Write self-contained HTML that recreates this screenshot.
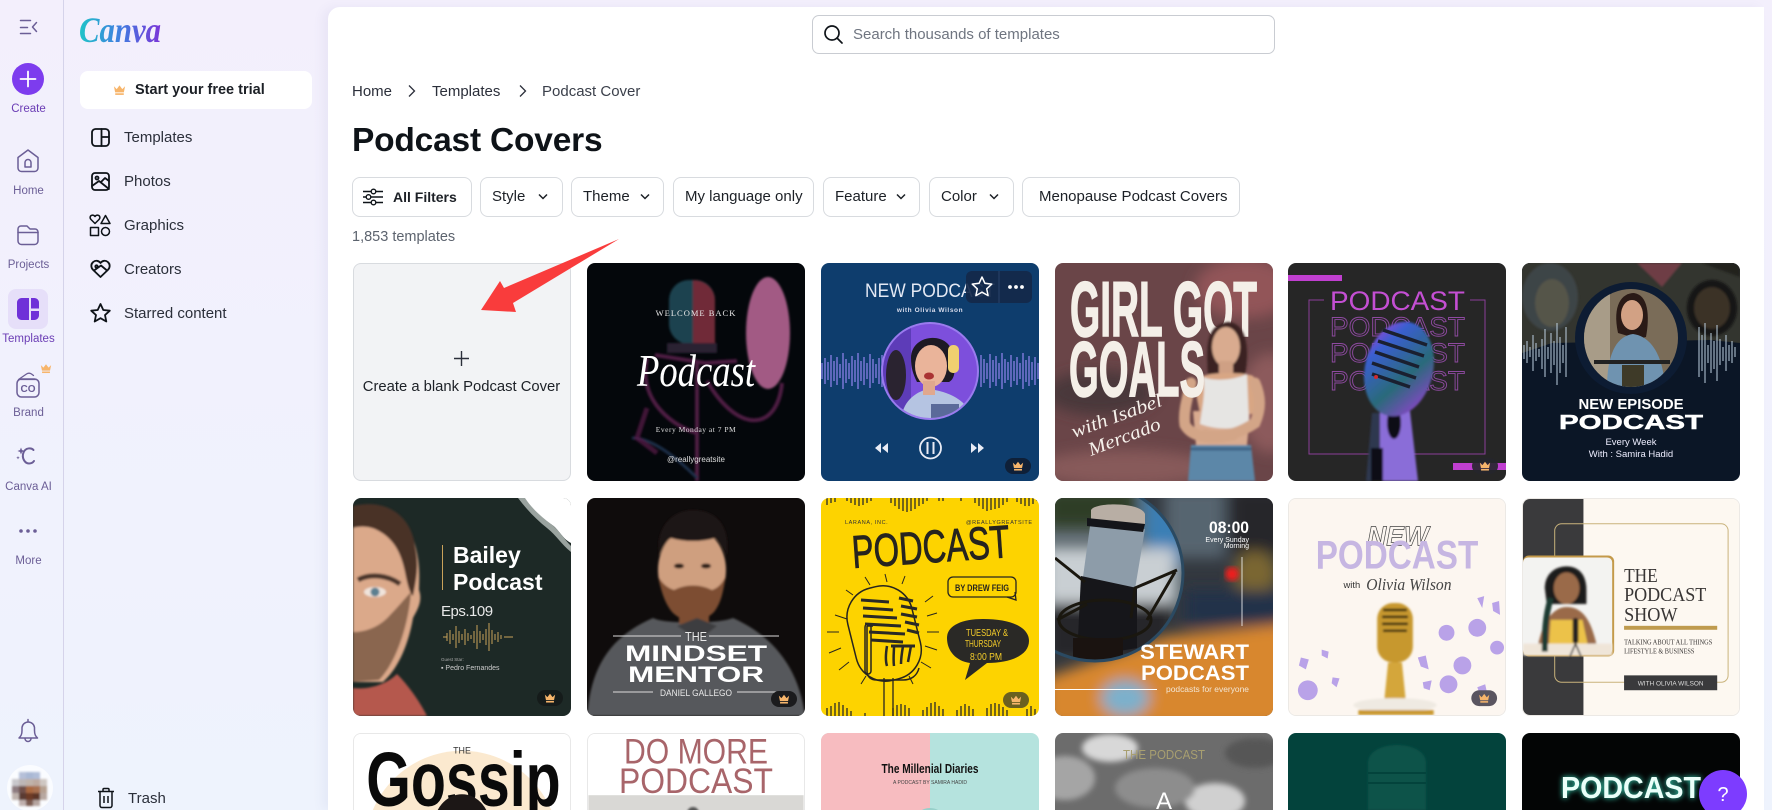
<!DOCTYPE html>
<html lang="en"><head><meta charset="utf-8"><title>Podcast Covers</title>
<style>
*{box-sizing:border-box}
html,body{margin:0;padding:0;width:1772px;height:810px;overflow:hidden}
#r{width:1772px;height:810px;overflow:hidden;position:relative;font-family:"Liberation Sans",sans-serif;background:linear-gradient(180deg,#f3effc 0%,#f1f1fd 45%,#eef3fd 100%);color:#0e1318}
.a{position:absolute;white-space:nowrap}
.rail{position:absolute;left:63px;top:0;width:1px;height:810px;background:#d5d3ea}
.rl{position:absolute;left:0;width:57px;text-align:center;font-size:11.5px;line-height:14px;color:#6b5e96;white-space:nowrap}
.pl{position:absolute;left:124px;font-size:15px;line-height:18px;color:#2b2f3a;white-space:nowrap}
.main{position:absolute;left:328px;top:7px;width:1436px;height:803px;background:#fff;border-radius:12px 0 0 0;box-shadow:-6px 0 10px rgba(90,90,160,.06)}
.f{position:absolute;top:177px;height:40px;border:1px solid #d8dbdf;border-radius:8px;background:#fff;font-size:15px;line-height:38px;color:#1c2026;white-space:nowrap;padding-left:11px}
.f svg{position:absolute;top:14px}
.c{position:absolute;width:218px;height:218px;border-radius:8px;overflow:hidden;display:block}
.c3{position:absolute;top:733px;width:218px;height:77px;border-radius:8px 8px 0 0;overflow:hidden;display:block}
text{font-family:"Liberation Sans",sans-serif}
</style></head><body><div id="r">
<svg width="0" height="0" style="position:absolute"><defs>
<filter id="b1"><feGaussianBlur stdDeviation="1"/></filter>
<filter id="b3"><feGaussianBlur stdDeviation="3"/></filter>
<filter id="b6" x="-40%" y="-40%" width="180%" height="180%"><feGaussianBlur stdDeviation="7"/></filter>
<symbol id="cr" viewBox="0 0 14 12"><path d="M1 2l3 3 3-4 3 4 3-3-1.300 6.500H2.300z" fill="#f7b56b"/><rect x="2.400" y="9.500" width="9.200" height="1.800" fill="#f7b56b"/></symbol>
<linearGradient id="lg" x1="0" x2="1"><stop offset="0" stop-color="#1fc4c8"/><stop offset=".5" stop-color="#3f7de0"/><stop offset="1" stop-color="#7b35d8"/></linearGradient>
<clipPath id="cc3"><circle cx="109" cy="108" r="47"/></clipPath>
<clipPath id="cc6"><ellipse cx="109" cy="75" rx="47" ry="49"/></clipPath>
<clipPath id="cc10"><circle cx="40" cy="75" r="88"/></clipPath>
</defs></svg>

<div class="rail"></div>
<svg class="a" style="left:0;top:0" width="63" height="810" fill="none" stroke="#6b5e96" stroke-width="1.500" stroke-linecap="round" stroke-linejoin="round">
<path d="M20.500 20.500h10M20.500 27.500h7M20.500 33.500h10M36.500 22.500l-4 4.500 4 4.500"/>
<circle cx="28" cy="79" r="16" fill="#7d3cee" stroke="none"/>
<path d="M28 71.500v15M20.500 79h15" stroke="#fff" stroke-width="1.800"/>
<path d="M18 157.500l10-7.500 10 7.500v10.500a3.500 3.500 0 0 1-3.500 3.500h-13a3.500 3.500 0 0 1-3.500-3.500z"/><path d="M25 167v-4.500a3 3 0 0 1 6 0v4.500z"/>
<path d="M18 229a3 3 0 0 1 3-3h6l3 3h5a3 3 0 0 1 3 3v9a3.500 3.500 0 0 1-3.500 3.500h-13a3.500 3.500 0 0 1-3.500-3.500z"/><path d="M18 232.500h20"/>
<rect x="8" y="289" width="40" height="40" rx="8" fill="#e6dff9" stroke="none"/>
<path d="M21.500 298H29v22h-7.500a4.500 4.500 0 0 1-4.500-4.500v-13a4.500 4.500 0 0 1 4.500-4.500zM31 298h3.500a4.500 4.500 0 0 1 4.500 4.500v6h-8zM31 311h8v4.500a4.500 4.500 0 0 1-4.500 4.500H31z" fill="#6f31d8" stroke="none"/>
<path d="M18.500 379.500l8-5.500c1.500-1 3.500-1 5 0l2 1.500M20 379.500h16" stroke-width="1.300"/><rect x="17" y="379" width="22" height="18" rx="4.500"/>
<text x="28" y="392" text-anchor="middle" font-size="10" font-weight="700" stroke="none" fill="#6b5e96">CO</text>
<use href="#cr" x="40" y="363" width="12" height="11" stroke="none"/>
<path d="M33.500 450c-2-2.500-8-2.500-10 2.500-2 5 1 11 5.500 11 2 0 4-1 5-2.500" stroke-width="2"/>
<path d="M21 447.500l1 2.500 2.500 1-2.500 1-1 2.500-1-2.500-2.500-1 2.500-1zM18 456l.5 1.200 1.200.5-1.200.5-.5 1.200-.5-1.200-1.200-.5 1.200-.5z" fill="#6b5e96" stroke="none"/>
<g fill="#6b5e96" stroke="none"><circle cx="21" cy="531" r="1.800"/><circle cx="28" cy="531" r="1.800"/><circle cx="35" cy="531" r="1.800"/></g>
<path d="M19 738h18.500c-2-2-3-3.500-3-7.500v-3a6.300 6.300 0 0 0-12.500 0v3c0 4-1 5.500-3 7.500z"/><path d="M28 719.500v1.500M25 738.500a3 3 0 0 0 6 0"/>
</svg>
<div class="rl" style="top:102px;color:#6b3db5">Create</div>
<div class="rl" style="top:184px">Home</div>
<div class="rl" style="top:258px">Projects</div>
<div class="rl" style="top:332px;color:#6b3db5">Templates</div>
<div class="rl" style="top:406px">Brand</div>
<div class="rl" style="top:480px">Canva AI</div>
<div class="rl" style="top:554px">More</div>
<svg class="a" style="left:6px;top:764px" width="48" height="46"><circle cx="24" cy="24" r="23" fill="#fff" opacity=".7"/>
<g filter="url(#b1)"><g transform="translate(6,8)">
<rect x="7" width="7" height="7" fill="#b5c0d8"/><rect x="14" width="7" height="7" fill="#a9b8d4"/><rect x="21" width="7" height="7" fill="#b0bdd8"/>
<rect y="7" width="7" height="7" fill="#c9c8cc"/><rect x="7" y="7" width="7" height="7" fill="#bdb6b6"/><rect x="14" y="7" width="7" height="7" fill="#c0b3aa"/><rect x="21" y="7" width="7" height="7" fill="#bdaaa0"/><rect x="28" y="7" width="7" height="7" fill="#cfc7c2"/>
<rect y="14" width="7" height="7" fill="#8d7c80"/><rect x="7" y="14" width="7" height="7" fill="#6f4f48"/><rect x="14" y="14" width="7" height="7" fill="#a9683f"/><rect x="21" y="14" width="7" height="7" fill="#a8704f"/><rect x="28" y="14" width="7" height="7" fill="#b5a090"/>
<rect y="21" width="7" height="7" fill="#bfb3ae"/><rect x="7" y="21" width="7" height="7" fill="#5a3a30"/><rect x="14" y="21" width="7" height="7" fill="#6d3a25"/><rect x="21" y="21" width="7" height="7" fill="#5c3528"/><rect x="28" y="21" width="7" height="7" fill="#b8a8a0"/>
<rect x="7" y="28" width="7" height="6" fill="#c0b0ad"/><rect x="14" y="28" width="7" height="6" fill="#7a5a50"/><rect x="21" y="28" width="7" height="6" fill="#b5a5a0"/>
</g></g></svg>

<svg class="a" style="left:76px;top:8px" width="92" height="42"><text x="3" y="34" font-size="36" font-style="italic" font-weight="700" fill="url(#lg)" textLength="82" lengthAdjust="spacingAndGlyphs" style="font-family:'Liberation Serif',serif">Canva</text></svg>
<div class="a" style="left:80px;top:71px;width:232px;height:38px;background:#fff;border-radius:8px"></div>
<svg class="a" style="left:113px;top:84px" width="13" height="12"><use href="#cr" width="13" height="12"/></svg>
<div class="a" style="left:135px;top:81px;font-size:14.500px;line-height:18px;font-weight:700;color:#1c2026">Start your free trial</div>
<svg class="a" style="left:80px;top:120px" width="40" height="340" fill="none" stroke="#0e1318" stroke-width="1.800" stroke-linejoin="round" stroke-linecap="round">
<rect x="12" y="9" width="17" height="17" rx="3.500"/><path d="M21.500 9v17M21.500 17h7.500"/>
<rect x="12" y="53" width="17" height="17" rx="3"/><circle cx="17" cy="58" r="1.500"/><path d="M12 66l7-5 10 8M21 62l4-4 4 3"/>
<g stroke-width="1.500"><path d="M15 103.500L11 99.500c-1.500-1.500-1-4 1-4.300 1.300-.2 2.300.4 3 1.300.7-.9 1.700-1.500 3-1.300 2 .3 2.500 2.800 1 4.300zM25.500 95.500l4.500 8h-9z"/><rect x="10.500" y="107.500" width="8" height="8"/><circle cx="25.500" cy="111.500" r="4"/></g>
<g transform="translate(0,-2.500)"><path d="M20.500 159.500l-7.300-7c-2.500-2.500-2.500-6 0-8 2.300-2 5.300-1.500 7.300 1 2-2.500 5-3 7.300-1 2.500 2 2.500 5.500 0 8zM14 153l7-5 6 5"/><circle cx="16.500" cy="149" r="1.200"/></g>
<path d="M20.500 184l2.800 6 6.500.7-4.800 4.400 1.300 6.400-5.800-3.300-5.800 3.300 1.300-6.400-4.800-4.400 6.500-.7z"/>
</svg>
<div class="pl" style="top:129px">Templates</div>
<div class="pl" style="top:173px">Photos</div>
<div class="pl" style="top:217px">Graphics</div>
<div class="pl" style="top:261px">Creators</div>
<div class="pl" style="top:305px">Starred content</div>
<svg class="a" style="left:96px;top:787px" width="20" height="23" fill="none" stroke="#0e1318" stroke-width="1.500" stroke-linejoin="round"><path d="M2 4.500h16M7 4.500v-2a1 1 0 0 1 1-1h4a1 1 0 0 1 1 1v2M4 4.500v14a2 2 0 0 0 2 2h8a2 2 0 0 0 2-2v-14M8 9v7M12 9v7"/></svg>
<div class="pl" style="left:128px;top:790px">Trash</div>

<div class="main"></div>
<div class="a" style="left:812px;top:15px;width:463px;height:39px;border:1px solid #c9ccd2;border-radius:7px;background:#fff"></div>
<svg class="a" style="left:823px;top:24px" width="21" height="21" fill="none" stroke="#0e1318" stroke-width="1.700" stroke-linecap="round"><circle cx="9" cy="9" r="7"/><path d="M14 14l5 5"/></svg>
<div class="a" style="left:853px;top:26px;font-size:15px;line-height:18px;color:#6f7580">Search thousands of templates</div>

<div class="a" style="left:352px;top:83px;font-size:15px;line-height:18px;color:#2b2f3a">Home</div>
<div class="a" style="left:432px;top:83px;font-size:15px;line-height:18px;color:#2b2f3a">Templates</div>
<div class="a" style="left:542px;top:83px;font-size:15px;line-height:18px;color:#3a3f4a">Podcast Cover</div>
<svg class="a" style="left:405px;top:83px" width="125" height="16" fill="none" stroke="#2b2f3a" stroke-width="1.300"><path d="M4 2.500l5.500 5.500-5.500 5.500M115 2.500l5.500 5.500-5.500 5.500"/></svg>
<div class="a" style="left:352px;top:120px;font-size:33.500px;line-height:42px;font-weight:700;color:#0e1318;letter-spacing:-.2px">Podcast Covers</div>

<div class="f" style="left:352px;width:120px;padding-left:40px;font-weight:700;font-size:14px">All Filters
<svg style="left:10px;top:10px" width="20" height="18" fill="none" stroke="#0e1318" stroke-width="1.400"><path d="M0 3.500h8M13 3.500h7M0 9h3M8 9h12M0 14.500h8M13 14.500h7"/><circle cx="10.500" cy="3.500" r="2.300"/><circle cx="5.500" cy="9" r="2.300"/><circle cx="10.500" cy="14.500" r="2.300"/></svg></div>
<div class="f" style="left:480px;width:83px">Style<svg style="left:56px" width="12" height="10" fill="none" stroke="#1c2026" stroke-width="1.500"><path d="M2 2.500l4 4 4-4"/></svg></div>
<div class="f" style="left:571px;width:93px">Theme<svg style="left:67px" width="12" height="10" fill="none" stroke="#1c2026" stroke-width="1.500"><path d="M2 2.500l4 4 4-4"/></svg></div>
<div class="f" style="left:673px;width:141px">My language only</div>
<div class="f" style="left:823px;width:97px">Feature<svg style="left:71px" width="12" height="10" fill="none" stroke="#1c2026" stroke-width="1.500"><path d="M2 2.500l4 4 4-4"/></svg></div>
<div class="f" style="left:929px;width:85px">Color<svg style="left:58px" width="12" height="10" fill="none" stroke="#1c2026" stroke-width="1.500"><path d="M2 2.500l4 4 4-4"/></svg></div>
<div class="f" style="left:1022px;width:218px;padding-left:16px">Menopause Podcast Covers</div>
<div class="a" style="left:352px;top:228px;font-size:14.500px;line-height:18px;color:#5c636e">1,853 templates</div>

<div class="a" style="left:352.500px;top:263px;width:218px;height:218px;background:#f2f3f5;border:1px solid #d8dbdf;border-radius:8px"></div>
<svg class="a" style="left:453px;top:350px" width="17" height="17" fill="none" stroke="#2b2f3a" stroke-width="1.400"><path d="M8.500 1v15M1 8.500h15"/></svg>
<div class="a" style="left:352.500px;top:378px;width:218px;text-align:center;font-size:14.800px;line-height:18px;color:#1c2026">Create a blank Podcast Cover</div>
<svg class="a" style="left:470px;top:232px" width="160" height="90"><path d="M11 78L30 49 34 56 149 7 43 71 46 80z" fill="#f93c3c"/></svg>

<!-- Row 1 -->
<svg class="c" style="left:586.800px;top:263px" viewBox="0 0 218 218"><rect width="218" height="218" fill="#04070b"/>
<g filter="url(#b1)"><rect x="82" y="17" width="46" height="64" rx="20" fill="#1c4350"/><path d="M106 17a22 20 0 0 1 22 20v44h-22z" fill="#702a38"/><rect x="80" y="80" width="50" height="10" fill="#2a2330"/><ellipse cx="181" cy="70" rx="22" ry="56" fill="#a25a84"/><path d="M60 95C50 140 90 165 110 170M68 92L118 100 150 98M110 100V218M120 118C150 170 190 170 195 120" fill="none" stroke="#4d1a42" stroke-width="4"/><path d="M45 175c20 0 45 20 65 40" fill="none" stroke="#1e2f4a" stroke-width="3"/><path d="M60 145l-10 30 20 15" fill="none" stroke="#5a1748" stroke-width="5" opacity=".7"/></g>
<text x="109" y="53" text-anchor="middle" font-size="8.500" fill="#e8e8e8" style="font-family:'Liberation Serif',serif" letter-spacing="1">WELCOME BACK</text>
<text x="109" y="123" text-anchor="middle" font-size="46" font-style="italic" fill="#fff" style="font-family:'Liberation Serif',serif" textLength="118" lengthAdjust="spacingAndGlyphs">Podcast</text>
<text x="109" y="169" text-anchor="middle" font-size="7.500" fill="#ddd" style="font-family:'Liberation Serif',serif" letter-spacing=".5">Every Monday at 7 PM</text>
<text x="109" y="199" text-anchor="middle" font-size="8" fill="#ddd">@reallygreatsite</text></svg>

<svg class="c" style="left:820.700px;top:263px" viewBox="0 0 218 218"><rect width="218" height="218" fill="#0e3d6d"/>
<text x="44" y="34" font-size="19" fill="#e4e9f4" textLength="130" lengthAdjust="spacingAndGlyphs">NEW PODCAST</text>
<text x="109" y="49" text-anchor="middle" font-size="6.500" fill="#d8dcec" font-weight="700" letter-spacing=".6">with Olivia Wilson</text>
<path d="M1 100v16M4 95v26M7 99v18M10 92v32M13 98v20M16 94v28M19 101v14M22 90v36M25 96v24M28 100v16M31 93v30M34 97v22M37 90v36M40 98v20M43 94v28M46 100v16M49 91v34M52 96v24M55 101v14M58 95v26M61 92v32M160 92v32M163 96v24M166 100v16M169 91v34M172 97v22M175 93v30M178 100v16M181 90v36M184 96v24M187 99v18M190 92v32M193 98v20M196 94v28M199 100v16M202 90v36M205 97v22M208 93v30M211 99v18M214 94v28M217 100v16" stroke="#8a7fe8" stroke-width="1.300"/>
<circle cx="109" cy="108" r="49" fill="#9a7bee"/><g clip-path="url(#cc3)"><rect x="55" y="55" width="110" height="110" fill="#7d4fdc"/><rect x="60" y="60" width="30" height="100" fill="#5d3cb8"/><ellipse cx="75" cy="112" rx="10" ry="25" fill="#2a2330"/><path d="M90 95c0-25 40-28 42-2 4 18 0 24-4 26l-32 0c-4-8-6-14-6-24z" fill="#1d1a24"/><ellipse cx="110" cy="103" rx="16" ry="21" fill="#eab49a"/><rect x="127" y="82" width="11" height="28" rx="5" fill="#f0d070"/><path d="M80 160c0-22 16-32 28-34 14 2 40 8 45 34z" fill="#b5c4e2"/><rect x="102" y="118" width="12" height="14" fill="#e0a88e"/><rect x="110" y="141" width="28" height="16" fill="#5a6a9a"/><ellipse cx="108" cy="113" rx="5" ry="3.500" fill="#a33"/></g>
<g fill="#e9ecf5"><path d="M60 180l-6 5 6 5zM67 180l-6 5 6 5zM150 180l6 5-6 5zM157 180l6 5-6 5z"/><rect x="105.500" y="179" width="2" height="12"/><rect x="111.500" y="179" width="2" height="12"/></g><circle cx="109.500" cy="185" r="10.500" fill="none" stroke="#e9ecf5" stroke-width="1.800"/>
<rect x="184" y="195" width="26" height="16" rx="8" fill="#0f2038"/><use href="#cr" x="191" y="197" width="12" height="12"/>
<rect x="145" y="8" width="66" height="32" rx="6" fill="#13284a" opacity=".92"/><path d="M178 8v32" stroke="#29426a"/>
<path d="M161 14l2.900 6.300 6.900.8-5.100 4.700 1.400 6.800-6.100-3.400-6.100 3.400 1.400-6.800-5.100-4.700 6.900-.8z" fill="none" stroke="#fff" stroke-width="1.500" stroke-linejoin="round"/>
<g fill="#fff"><circle cx="189" cy="24" r="1.900"/><circle cx="195" cy="24" r="1.900"/><circle cx="201" cy="24" r="1.900"/></g></svg>

<svg class="c" style="left:1054.500px;top:263px" viewBox="0 0 218 218"><rect width="218" height="218" fill="#6a4548"/>
<g filter="url(#b6)"><ellipse cx="190" cy="25" rx="50" ry="30" fill="#925458"/><ellipse cx="45" cy="130" rx="55" ry="22" fill="#4a383b"/><ellipse cx="70" cy="205" rx="90" ry="18" fill="#875a5a"/><ellipse cx="215" cy="140" rx="30" ry="50" fill="#8c5a5c"/></g>
<text x="15" y="73" font-size="78" font-weight="700" fill="#f4efe8" stroke="#f4efe8" stroke-width="1.500" textLength="187" lengthAdjust="spacingAndGlyphs">GIRL GOT</text>
<g filter="url(#b1)" stroke-linecap="round"><path d="M153 112c-2-30-2-50 20-53 18 1 22 25 17 53z" fill="#3a2320"/><ellipse cx="171" cy="84" rx="14" ry="20" fill="#d9ab8f"/><rect x="164" y="98" width="14" height="16" fill="#cfa084"/><path d="M148 113c10-4 42-4 50 0l8 10-1 28h-60l-4-20z" fill="#d8a684"/><path d="M141 182l-3-34h57l-3 34z" fill="#d9ab8f"/><path d="M148 114c8 4 30 4 44-3l2 50c-14 6-32 6-49 0 2-16 6-32 3-47z" fill="#e6e5e3"/><path d="M136 120c-4 16-8 30-6 42 8 14 30 14 48 10M200 120c6 14 6 26 0 40-12 8-30 16-50 12" fill="none" stroke="#d3a587" stroke-width="11"/><path d="M136 182h60l4 36h-67z" fill="#5c87a8"/><path d="M137 186h58" stroke="#3e6485" stroke-width="3"/></g>
<text x="14" y="133" font-size="78" font-weight="700" fill="#f4efe8" stroke="#f4efe8" stroke-width="1.500" textLength="136" lengthAdjust="spacingAndGlyphs">GOALS</text>
<g fill="#f5f0ea" font-style="italic"><text transform="translate(19,175) rotate(-20)" font-size="19" textLength="95" lengthAdjust="spacingAndGlyphs" style="font-family:'Liberation Serif',serif">with Isabel</text><text transform="translate(36,193) rotate(-21)" font-size="19" textLength="76" lengthAdjust="spacingAndGlyphs" style="font-family:'Liberation Serif',serif">Mercado</text></g></svg>

<svg class="c" style="left:1288.300px;top:263px" viewBox="0 0 218 218"><defs><linearGradient id="g5" x1="0" y1="0" x2="1" y2="1"><stop offset="0" stop-color="#c33adf"/><stop offset=".25" stop-color="#3a5fd0"/><stop offset=".6" stop-color="#2a6a7a"/><stop offset="1" stop-color="#a63ae0"/></linearGradient></defs><rect width="218" height="218" fill="#262626"/>
<rect y="12" width="54" height="6" fill="#c03fd0"/><rect x="21" y="37" width="176" height="154" fill="none" stroke="#8a3f98"/>
<rect x="165" y="200" width="53" height="7" fill="#c03fd0"/>
<rect x="36" y="30" width="146" height="18" fill="#262626"/>
<text x="42" y="47" font-size="27" fill="#c44fd3" textLength="135" lengthAdjust="spacingAndGlyphs">PODCAST</text>
<g fill="none" stroke="#8e4aa0" stroke-width=".9" font-size="27"><text x="42" y="73" textLength="135" lengthAdjust="spacingAndGlyphs">PODCAST</text><text x="42" y="99" textLength="135" lengthAdjust="spacingAndGlyphs">PODCAST</text><text x="42" y="127" textLength="135" lengthAdjust="spacingAndGlyphs">PODCAST</text></g>
<g filter="url(#b1)"><path d="M84 150h26l-4 68H78z" fill="#2f3850"/><path d="M92 148h30l8 70H92z" fill="#8a6dd8"/><rect x="83" y="185" width="12" height="33" fill="#0c0c14"/><ellipse cx="106" cy="160" rx="7" ry="16" fill="#101018"/><ellipse cx="111" cy="106" rx="34" ry="48" fill="url(#g5)" transform="rotate(14 111 106)"/></g>
<g stroke="#1a2030" stroke-width="3.500" fill="none"><path d="M95 67l44 15M90 78l46 15M87 89l44 15M84 100l44 15M84 111l38 13"/></g>
<circle cx="88" cy="114" r="2" fill="#d02a30"/>
<rect x="184" y="195" width="26" height="16" rx="8" fill="#26262c" opacity=".9"/><use href="#cr" x="191" y="197" width="12" height="12"/></svg>

<svg class="c" style="left:1522.200px;top:263px" viewBox="0 0 218 218"><rect width="218" height="218" fill="#0b1626"/><path d="M0 0h218v80l-30-3-158 3L0 90z" fill="#33352f"/>
<g filter="url(#b1)"><ellipse cx="28" cy="34" rx="28" ry="34" fill="#3e4446"/><ellipse cx="30" cy="40" rx="17" ry="24" fill="#55554a"/><ellipse cx="190" cy="45" rx="25" ry="28" fill="#191713"/><ellipse cx="190" cy="45" rx="18" ry="21" fill="#3a3228"/><path d="M115 0h45l-20 24z" fill="#6e3c45"/><path d="M180 0h38v14z" fill="#20201c"/></g>
<path d="M2 82v14M5 78v22M8 84v10M11 72v36M14 80v18M17 86v8M20 76v30M23 66v48M26 84v12M29 70v40M32 78v24M35 60v62M38 74v36M41 82v18M44 64v50M177 64v50M180 72v36M183 60v60M186 82v18M189 70v40M192 78v28M195 62v56M198 76v26M201 84v14M204 72v36M207 82v16M210 78v22M213 84v10" stroke="#bcd0e0" stroke-width="1"/>
<ellipse cx="109" cy="75" rx="56" ry="56" fill="#0d1c33"/><g clip-path="url(#cc6)"><rect x="60" y="20" width="100" height="110" fill="#7a6c58"/><rect x="60" y="20" width="28" height="110" fill="#a89c88"/><path d="M96 70c-6-28 4-40 16-40 14 2 16 22 12 44l-8 2z" fill="#2a1a16"/><ellipse cx="110" cy="52" rx="11" ry="15" fill="#d2a184"/><path d="M85 125c0-35 10-52 26-54 16 2 30 18 32 54z" fill="#6f93b0"/><rect x="72" y="97" width="76" height="4" fill="#222"/><rect x="100" y="102" width="22" height="24" fill="#3e3a28"/></g>
<text x="109" y="146" text-anchor="middle" font-size="15" font-weight="700" fill="#fff" textLength="105" lengthAdjust="spacingAndGlyphs">NEW EPISODE</text>
<text x="109" y="166" text-anchor="middle" font-size="20" font-weight="700" fill="#fff" textLength="144" lengthAdjust="spacingAndGlyphs" stroke="#fff" stroke-width=".5">PODCAST</text>
<text x="109" y="182" text-anchor="middle" font-size="9.500" fill="#eef">Every Week</text>
<text x="109" y="194" text-anchor="middle" font-size="9.500" fill="#eef">With : Samira Hadid</text></svg>

<!-- Row 2 -->
<svg class="c" style="left:352.500px;top:498px" viewBox="0 0 218 218"><rect width="218" height="218" fill="#1d2926"/>
<path d="M168 0h50v45c-10-5-12-15-22-20-10-8-18-14-28-25z" fill="#fff"/><path d="M165 0l7 0c8 12 18 20 26 26 8 6 12 14 20 22v6c-10-8-14-16-24-24-10-8-20-18-29-30z" fill="#9aa39f"/>
<g filter="url(#b1)"><path d="M0 10c30-6 52 10 60 30 8 24 6 40 6 52 4 12-2 20-6 28-4 24-14 50-30 64H0z" fill="#dba98a"/><path d="M0 8c34-8 58 10 62 40 4 18 2 30-2 50-4-4-6-14-8-24-4-20-12-34-28-42C16 28 6 28 0 30z" fill="#4a3228"/><path d="M0 134c14 0 28-6 38-18 8-8 14-16 20-22-2 30-14 70-32 88l-26 2z" fill="#8a6650"/><path d="M0 190c16 2 34-4 44-14 10 10 22 26 30 42H0z" fill="#b5584d"/><ellipse cx="22" cy="94" rx="11" ry="5" fill="#f0e4dc"/><circle cx="22" cy="94" r="4.500" fill="#5b7f90"/><path d="M5 82c10-6 28-6 42 4" fill="none" stroke="#4a342a" stroke-width="5"/></g>
<rect x="89" y="47" width="1" height="45" fill="#c9a25a"/>
<text x="100" y="65" font-size="23" font-weight="700" fill="#fff">Bailey</text><text x="100" y="92" font-size="23" font-weight="700" fill="#fff">Podcast</text><text x="88" y="118" font-size="15" fill="#e8e8e8" letter-spacing="-.5">Eps.109</text>
<path d="M90 139h4M94 135v8M97 132v14M100 136v6M103 128v22M106 133v12M109 136v6M112 131v16M115 135v8M118 137v4M121 133v12M124 127v24M127 133v12M130 136v6M133 131v16M136 125v28M139 132v14M142 136v6M145 134v10M148 137v4M151 139h9" stroke="#c9a25a" stroke-width="1" fill="none"/>
<text x="88" y="163" font-size="4.500" fill="#aaa">Guest Star:</text><text x="88" y="172" font-size="7" fill="#ccc">▪ Pedro Fernandes</text>
<rect x="184" y="192" width="26" height="16" rx="8" fill="#151b1a"/><use href="#cr" x="191" y="194" width="12" height="12"/></svg>

<svg class="c" style="left:586.800px;top:498px" viewBox="0 0 218 218"><rect width="218" height="218" fill="#0f0c0c"/>
<g filter="url(#b1)"><path d="M0 218c4-46 20-78 66-98 10 6 66 6 80 0 40 18 66 50 72 98z" fill="#57595c"/><ellipse cx="105" cy="72" rx="34" ry="42" fill="#cf9f7f"/><path d="M72 58c-4-30 14-46 34-46 22 0 38 14 34 46-4-10-8-16-12-18-14 4-30 4-44 0-4 2-8 8-12 18z" fill="#1f1512"/><path d="M71 78c3 14 6 26 14 36 12 12 30 12 42 0 8-10 9-22 12-36-4 8-8 12-14 14-12-6-26-6-38 0-6-2-12-6-16-14z" fill="#7d4e30"/><path d="M92 112h30v14H92z" fill="#7d4e30"/><path d="M90 128l20-8 20 8-18 14z" fill="#3d3e40"/><ellipse cx="92" cy="68" rx="5" ry="2.500" fill="#2a1a14"/><ellipse cx="119" cy="68" rx="5" ry="2.500" fill="#2a1a14"/></g>
<g fill="#fff" text-anchor="middle"><text x="109" y="143" font-size="13" fill="#e8e8e8" textLength="22" lengthAdjust="spacingAndGlyphs">THE</text><text x="109" y="163" font-size="22" font-weight="700" textLength="142" lengthAdjust="spacingAndGlyphs">MINDSET</text><text x="109" y="184" font-size="22" font-weight="700" textLength="136" lengthAdjust="spacingAndGlyphs">MENTOR</text><text x="109" y="198" font-size="9.500" fill="#e8e8e8" textLength="72" lengthAdjust="spacingAndGlyphs">DANIEL GALLEGO</text></g>
<path d="M26 138h68M122 138h70M26 194h40M150 194h42" stroke="#ddd" stroke-width="1"/>
<rect x="184" y="193" width="26" height="16" rx="8" fill="#1b1b1d"/><use href="#cr" x="191" y="195" width="12" height="12"/></svg>

<svg class="c" style="left:820.700px;top:498px" viewBox="0 0 218 218"><rect width="218" height="218" fill="#fdd300"/>
<path d="M6 0v7M10 0v5M14 0v4M26 0v3M30 0v5M34 0v7M38 0v8M42 0v7M46 0v5M50 0v3M70 0v5M74 0v8M78 0v11M82 0v13M86 0v14M90 0v13M94 0v11M98 0v8M102 0v6M106 0v3M118 0v3M122 0v3M140 0v3M154 0v5M158 0v8M162 0v11M166 0v13M170 0v12M174 0v11M178 0v10M182 0v7M186 0v4M196 0v4M200 0v6M204 0v8M208 0v8M212 0v6M216 0v3M6 218v-8M10 218v-10M14 218v-13M18 218v-14M22 218v-11M26 218v-8M30 218v-5M44 218v-3M72 218v-8M76 218v-11M80 218v-12M84 218v-11M88 218v-8M102 218v-6M106 218v-9M110 218v-13M114 218v-14M118 218v-10M122 218v-7M136 218v-6M140 218v-10M144 218v-12M148 218v-10M152 218v-7M166 218v-8M170 218v-12M174 218v-13M178 218v-12M182 218v-9M186 218v-6M206 218v-7M210 218v-10M214 218v-7" stroke="#2a2a28" stroke-width="1.300"/>
<text x="24" y="26" font-size="5.500" fill="#333" letter-spacing=".6">LARANA, INC.</text><text x="145" y="26" font-size="5.500" fill="#333" letter-spacing=".6">@REALLYGREATSITE</text>
<text transform="translate(32,70) rotate(-4)" font-size="46" fill="#26241f" stroke="#26241f" stroke-width=".8" textLength="158" lengthAdjust="spacingAndGlyphs">PODCAST</text>
<rect x="127" y="79" width="68" height="20" rx="5" fill="none" stroke="#26241f" stroke-width="1.300"/><path d="M186 99l9 3-1-8" fill="none" stroke="#26241f" stroke-width="1.300"/>
<text x="161" y="93" text-anchor="middle" font-size="9" font-weight="700" fill="#26241f" textLength="54" lengthAdjust="spacingAndGlyphs">BY DREW FEIG</text>
<path d="M126 140c0-12 14-19 36-19 28 0 46 8 46 22 0 14-18 22-42 22l-22 17 5-17c-14-2-23-12-23-25z" fill="#2a2926"/>
<g fill="#f5cd2a" text-anchor="middle" font-size="10"><text x="166" y="138" textLength="42" lengthAdjust="spacingAndGlyphs">TUESDAY &amp;</text><text x="162" y="149" textLength="36" lengthAdjust="spacingAndGlyphs">THURSDAY</text><text x="165" y="162" textLength="32" lengthAdjust="spacingAndGlyphs">8:00 PM</text></g>
<path d="M63 218V180M72 218V180" stroke="#26241f" stroke-width="1.300"/>
<g fill="none" stroke="#26241f" stroke-width="1.500"><rect x="30" y="88" width="66" height="95" rx="30" transform="rotate(-14 63 135)"/><path d="M46 128v45c0 6 4 9 10 9h26c8 0 14-4 16-12" /><path d="M52 128h-6"/><rect x="44" y="126" width="6" height="50" rx="3"/></g>
<path d="M40 102l28 2M42 110l30 2M42 118l34 2M44 126l36 2M48 134l36 2M50 142l32 2M78 100l14 3M80 108l16 3M80 116l16 3M84 124l14 3M86 132l12 3M70 148l24 0" stroke="#2a2926" stroke-width="3" fill="none"/>
<path d="M66 168c-2-6-1-14 0-20M73 168c-1-7 0-14 0-20M80 166c0-6 1-12 2-18M87 164c1-5 2-11 3-16" stroke="#2a2926" stroke-width="2.500" fill="none"/>
<path d="M64 76l2 8M44 79l5 8M84 78l-3 8M25 92l7 5M112 98l-8 6M14 117l12 4M116 115l-10 3M6 134h12M118 134h-12M8 155l12-5M116 152l-12-4M18 172l10-8M110 170l-10-6M40 186l5-8M92 186l-4-8" stroke="#26241f" stroke-width="1"/>
<rect x="182" y="194" width="26" height="16" rx="8" fill="#6a6020"/><use href="#cr" x="189" y="196" width="12" height="12"/></svg>

<svg class="c" style="left:1054.500px;top:498px" viewBox="0 0 218 218"><rect width="218" height="218" fill="#33383f"/>
<g filter="url(#b6)"><rect x="110" y="-10" width="60" height="70" fill="#56656f"/><rect x="175" y="-10" width="60" height="65" fill="#26282b"/><ellipse cx="200" cy="75" rx="22" ry="22" fill="#7a6630"/><rect x="130" y="92" width="100" height="36" fill="#22304a"/><path d="M110 138L240 125v105H-10v-50z" fill="#d8872f"/><ellipse cx="70" cy="200" rx="24" ry="18" fill="#7cb0cc"/></g>
<circle cx="177" cy="76" r="7" fill="#f01c1c" filter="url(#b3)"/>
<g clip-path="url(#cc10)"><rect width="130" height="170" fill="#5e6a70"/><g filter="url(#b6)"><rect x="-10" y="-10" width="90" height="40" fill="#2e3d26"/><rect x="90" y="-10" width="40" height="80" fill="#3a7fb5"/><rect x="-10" y="50" width="130" height="55" fill="#c9cfd3"/><rect x="-10" y="105" width="130" height="60" fill="#27272a"/></g>
<path d="M36 12c4-8 50-8 54 4v10H36z" fill="#b8aea4"/><path d="M35 28l55 3-10 60-52-12z" fill="#8d9ca9"/><path d="M32 20l58 6-2 8-56-6z" fill="#14151a"/><path d="M26 78l56 12 0 60-60 10z" fill="#16161a"/>
<g fill="none" stroke="#1a170f" stroke-width="3"><ellipse cx="50" cy="122" rx="46" ry="20"/><path d="M0 60l30 24M122 72L80 90l-4 30M120 74L92 122M2 122l30-16"/></g>
<rect x="18" y="140" width="50" height="25" fill="#1a1310"/></g>
<circle cx="40" cy="75" r="88" fill="none" stroke="#2b4a62" stroke-width="3"/>
<g fill="#fff" text-anchor="end"><text x="194" y="35" font-size="17" font-weight="700" textLength="40" lengthAdjust="spacingAndGlyphs">08:00</text><text x="194" y="44" font-size="7">Every Sunday</text><text x="194" y="50" font-size="7">Morning</text></g>
<path d="M187 59v69" stroke="#fff" stroke-width=".8"/>
<g fill="#fff" font-weight="700"><text x="85" y="161" font-size="21" textLength="109" lengthAdjust="spacingAndGlyphs">STEWART</text><text x="86" y="182" font-size="21" textLength="108" lengthAdjust="spacingAndGlyphs">PODCAST</text></g>
<text x="111" y="194" font-size="8" fill="#f3e6d4" textLength="83" lengthAdjust="spacingAndGlyphs">podcasts for everyone</text><path d="M0 191.500h102" stroke="#fff"/></svg>

<svg class="c" style="left:1288.300px;top:498px;border:1px solid #ece9e5" viewBox="0 0 218 218"><rect width="218" height="218" fill="#fcf6f0"/>
<text x="79" y="47" font-size="28" font-style="italic" font-weight="700" fill="#fcf6f0" stroke="#444" stroke-width=".7" textLength="62" lengthAdjust="spacingAndGlyphs">NEW</text>
<text x="27" y="70" font-size="40" font-weight="700" fill="#c6b6e2" textLength="164" lengthAdjust="spacingAndGlyphs">PODCAST</text>
<text x="55" y="90" font-size="9.500" fill="#333">with</text><text x="78" y="92" font-size="17" font-style="italic" fill="#444" style="font-family:'Liberation Serif',serif" textLength="86" lengthAdjust="spacingAndGlyphs">Olivia Wilson</text>
<g fill="#b9a2e8"><circle cx="159" cy="135" r="8"/><circle cx="190" cy="130" r="9"/><circle cx="175" cy="168" r="9"/><circle cx="210" cy="150" r="7"/><circle cx="161" cy="187" r="9"/><circle cx="19" cy="193" r="10"/><path d="M12 160l8 2-3 10-7-4zM33 152l7 2-1 7-6-3zM190 100l7-2-2 12zM205 105l7-2 1 14-7-4zM44 180l7 1-3 9-5-4zM190 190l8-3 2 9-7 2zM130 160l8-2 3 14-8-3zM135 185l9-2-2 10-6-2z"/></g>
<g filter="url(#b1)"><rect x="89" y="105" width="36" height="60" rx="16" fill="#c7982f"/><path d="M95 112h24M94 119h26M94 126h26M95 133h24" stroke="#2a2010" stroke-width="2.500"/><path d="M100 165h14l4 40h-22z" fill="#d4a63a"/><path d="M84 205h44l6 8H78z" fill="#b38628"/><ellipse cx="107" cy="208" rx="42" ry="7" fill="#efeae2"/><rect x="70" y="213" width="76" height="5" fill="#c9982e"/></g>
<rect x="184" y="193" width="26" height="16" rx="8" fill="#5a5560"/><use href="#cr" x="191" y="195" width="12" height="12"/></svg>

<svg class="c" style="left:1522.200px;top:498px;border:1px solid #ece9e5" viewBox="0 0 218 218"><rect width="218" height="218" fill="#fdf8f1"/><rect width="61" height="218" fill="#3a3a3c"/>
<rect x="32" y="25" width="175" height="160" rx="7" fill="none" stroke="#c9b37c"/>
<rect y="57" width="92" height="102" rx="6" fill="#c49a4a"/><rect y="59" width="90" height="98" rx="5" fill="#f3f3f1"/>
<g filter="url(#b1)"><path d="M22 90c0-14 10-22 22-22s20 8 20 24v14H24z" fill="#1e1a1a"/><ellipse cx="44" cy="90" rx="13" ry="16" fill="#9a6a4a"/><path d="M14 155c4-30 16-46 30-46 18 0 26 16 32 46z" fill="#9a6a4a"/><path d="M28 122h32l6 28H26z" fill="#ecc24a"/><path d="M0 146h90v12H0z" fill="#efe5d8"/><rect x="50" y="120" width="6" height="26" rx="3" fill="#202024"/><path d="M53 146l-6 14M53 146l6 14" stroke="#202024" stroke-width="1.500"/><path d="M28 100c-6 20-6 36-6 54" stroke="#1e3a30" stroke-width="6" fill="none"/></g>
<g fill="#383534"><text x="102" y="84" font-size="20" style="font-family:'Liberation Serif',serif" textLength="34" lengthAdjust="spacingAndGlyphs">THE</text><text x="102" y="103" font-size="20" style="font-family:'Liberation Serif',serif" textLength="83" lengthAdjust="spacingAndGlyphs">PODCAST</text><text x="102" y="123" font-size="20" style="font-family:'Liberation Serif',serif" textLength="54" lengthAdjust="spacingAndGlyphs">SHOW</text><text x="102" y="147" font-size="7" style="font-family:'Liberation Serif',serif" textLength="89" lengthAdjust="spacingAndGlyphs">TALKING ABOUT ALL THINGS</text><text x="102" y="156" font-size="7" style="font-family:'Liberation Serif',serif" textLength="71" lengthAdjust="spacingAndGlyphs">LIFESTYLE &amp; BUSINESS</text></g>
<rect x="102" y="128" width="94" height="4" fill="#bf9b4e"/><rect x="102" y="178" width="94" height="15" fill="#3a3a3c"/><text x="149" y="188" text-anchor="middle" font-size="6.500" fill="#ddd">WITH OLIVIA WILSON</text></svg>

<!-- Row 3: visible portion only (77px to the frame edge) -->
<svg class="c3" style="left:352.500px;border:1px solid #e8e8e8;border-bottom:0" viewBox="0 0 218 77"><rect width="218" height="77" fill="#fff"/><circle cx="109" cy="115" r="98" fill="#fbe9cf"/>
<text x="109" y="20" text-anchor="middle" font-size="9" fill="#333">THE</text>
<text x="12" y="73" font-size="78" font-weight="700" fill="#0a0a0a" textLength="197" lengthAdjust="spacingAndGlyphs">Gossip</text>
<ellipse cx="109" cy="95" rx="29" ry="34" fill="#1c1716"/><ellipse cx="109" cy="105" rx="18" ry="25" fill="#a06a48"/></svg>
<svg class="c3" style="left:586.800px;border:1px solid #e8e8e8;border-bottom:0" viewBox="0 0 218 77"><rect width="218" height="77" fill="#fff"/><rect y="62" width="218" height="15" fill="#d9d8d5"/>
<g fill="#a8656a"><text x="109" y="30" text-anchor="middle" font-size="36" textLength="146" lengthAdjust="spacingAndGlyphs">DO MORE</text><text x="109" y="60" text-anchor="middle" font-size="36" textLength="156" lengthAdjust="spacingAndGlyphs">PODCAST</text></g><circle cx="106" cy="80" r="6" fill="#555" filter="url(#b1)"/></svg>
<svg class="c3" style="left:820.700px" viewBox="0 0 218 77"><rect width="218" height="77" fill="#b5e3de"/><rect width="109" height="77" fill="#f7bcc0"/><circle cx="109" cy="92" r="16" fill="#e9a0a0" stroke="#98d0ca" stroke-width="2"/>
<text x="109" y="40" text-anchor="middle" font-size="13" font-weight="700" fill="#111" textLength="97" lengthAdjust="spacingAndGlyphs">The Millenial Diaries</text><text x="109" y="51" text-anchor="middle" font-size="5" fill="#444" textLength="74" lengthAdjust="spacingAndGlyphs">A PODCAST BY SAMIRA HADID</text></svg>
<svg class="c3" style="left:1054.500px" viewBox="0 0 218 77"><rect width="218" height="77" fill="#6c6c6c"/><g filter="url(#b3)"><ellipse cx="55" cy="15" rx="28" ry="14" fill="#d8d8d8"/><ellipse cx="10" cy="45" rx="30" ry="22" fill="#a5a5a5"/><ellipse cx="160" cy="68" rx="30" ry="18" fill="#d0d0d0"/><ellipse cx="100" cy="55" rx="40" ry="20" fill="#8d8d8d"/><ellipse cx="200" cy="20" rx="30" ry="15" fill="#565656"/></g>
<text x="109" y="26" text-anchor="middle" font-size="13" fill="#a89f70" textLength="82" lengthAdjust="spacingAndGlyphs">THE PODCAST</text><text x="109" y="76" text-anchor="middle" font-size="24" fill="#fff">A</text></svg>
<svg class="c3" style="left:1288.300px" viewBox="0 0 218 77"><rect width="218" height="77" fill="#03433c"/><path d="M80 30c0-24 58-24 58 0v47H80z" fill="#0b5249" filter="url(#b1)"/><path d="M80 40h58M80 50h58" stroke="#03433c" stroke-width="2"/></svg>
<svg class="c3" style="left:1522.200px" viewBox="0 0 218 77"><rect width="218" height="77" fill="#030505"/><text x="39" y="65" font-size="31" font-weight="700" fill="#3adfc0" textLength="140" lengthAdjust="spacingAndGlyphs" filter="url(#b3)">PODCAST</text><text x="39" y="65" font-size="31" font-weight="700" fill="#eafff9" textLength="140" lengthAdjust="spacingAndGlyphs">PODCAST</text></svg>

<svg class="a" style="left:1699px;top:770px" width="48" height="40"><circle cx="24" cy="24" r="24" fill="#7d3cff"/><text x="24" y="31" text-anchor="middle" font-size="20" fill="#fff">?</text></svg>
</div></body></html>
